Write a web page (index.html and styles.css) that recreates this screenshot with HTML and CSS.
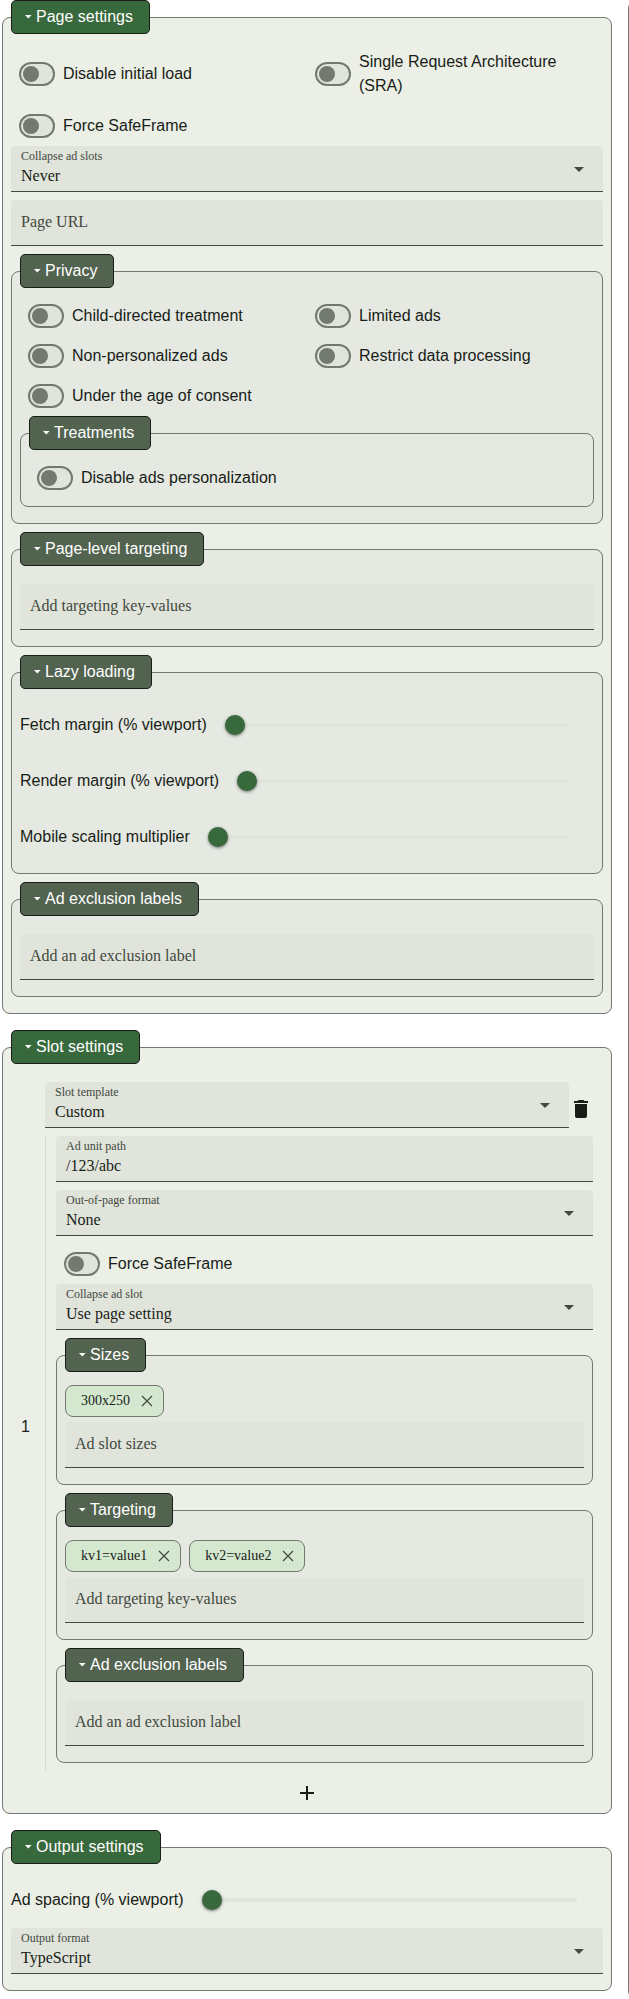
FILE: index.html
```html
<!DOCTYPE html>
<html lang="en">
<head>
<meta charset="utf-8">
<title>Ad configurator</title>
<link rel="stylesheet" href="styles.css">
</head>
<body>
<svg class="defs" width="0" height="0" aria-hidden="true">
  <symbol id="marker" viewBox="0 0 7 4"><path d="M0 0h6.600L3.300 3.400z"/></symbol>
  <symbol id="drop" viewBox="0 0 24 24"><path d="M7 10l5 5 5-5z"/></symbol>
  <symbol id="close" viewBox="0 0 18 18"><path d="M4 4l10 10M14 4L4 14"/></symbol>
  <symbol id="trash" viewBox="0 0 24 24"><path d="M6 19c0 1.100.9 2 2 2h8c1.100 0 2-.9 2-2V7H6zM19 4h-3.500l-1-1h-5l-1 1H5v2h14z"/></symbol>
  <symbol id="plus" viewBox="0 0 24 24"><path d="M19 13h-6v6h-2v-6H5v-2h6V5h2v6h6z"/></symbol>
</svg>
<div class="app">
  <main class="settings">
    <fieldset class="group">
      <legend><svg class="marker"><use href="#marker"/></svg>Page settings</legend>
      <div class="switches">
        <label class="toggle"><span class="switch"></span><span>Disable initial load</span></label>
        <label class="toggle"><span class="switch"></span><span>Single Request Architecture (SRA)</span></label>
        <label class="toggle"><span class="switch"></span><span>Force SafeFrame</span></label>
      </div>
      <div class="field"><div class="text"><span class="caption">Collapse ad slots</span><span class="value">Never</span></div><svg class="drop"><use href="#drop"/></svg></div>
      <div class="field"><span class="placeholder">Page URL</span></div>

      <fieldset class="group nested">
        <legend><svg class="marker"><use href="#marker"/></svg>Privacy</legend>
        <div class="switches">
          <label class="toggle"><span class="switch"></span><span>Child-directed treatment</span></label>
          <label class="toggle"><span class="switch"></span><span>Limited ads</span></label>
          <label class="toggle"><span class="switch"></span><span>Non-personalized ads</span></label>
          <label class="toggle"><span class="switch"></span><span>Restrict data processing</span></label>
          <label class="toggle"><span class="switch"></span><span>Under the age of consent</span></label>
        </div>
        <fieldset class="group nested">
          <legend><svg class="marker"><use href="#marker"/></svg>Treatments</legend>
          <div class="switches">
            <label class="toggle"><span class="switch"></span><span>Disable ads personalization</span></label>
          </div>
        </fieldset>
      </fieldset>

      <fieldset class="group nested">
        <legend><svg class="marker"><use href="#marker"/></svg>Page-level targeting</legend>
        <div class="chips"></div>
        <div class="field"><span class="placeholder">Add targeting key-values</span></div>
      </fieldset>

      <fieldset class="group nested">
        <legend><svg class="marker"><use href="#marker"/></svg>Lazy loading</legend>
        <div class="slider"><span>Fetch margin (% viewport)</span><span class="rail"><span class="knob"></span></span></div>
        <div class="slider"><span>Render margin (% viewport)</span><span class="rail"><span class="knob"></span></span></div>
        <div class="slider"><span>Mobile scaling multiplier</span><span class="rail"><span class="knob"></span></span></div>
      </fieldset>

      <fieldset class="group nested">
        <legend><svg class="marker"><use href="#marker"/></svg>Ad exclusion labels</legend>
        <div class="chips"></div>
        <div class="field"><span class="placeholder">Add an ad exclusion label</span></div>
      </fieldset>
    </fieldset>

    <fieldset class="group">
      <legend><svg class="marker"><use href="#marker"/></svg>Slot settings</legend>
      <div class="slot">
        <div class="slot-index">1</div>
        <div class="slot-main">
          <div class="slot-head">
            <div class="field"><div class="text"><span class="caption">Slot template</span><span class="value">Custom</span></div><svg class="drop"><use href="#drop"/></svg></div>
            <svg class="icon"><use href="#trash"/></svg>
          </div>
          <div class="slot-body">
            <div class="field"><div class="text"><span class="caption">Ad unit path</span><span class="value">/123/abc</span></div></div>
            <div class="field"><div class="text"><span class="caption">Out-of-page format</span><span class="value">None</span></div><svg class="drop"><use href="#drop"/></svg></div>
            <div class="switches">
              <label class="toggle"><span class="switch"></span><span>Force SafeFrame</span></label>
            </div>
            <div class="field"><div class="text"><span class="caption">Collapse ad slot</span><span class="value">Use page setting</span></div><svg class="drop"><use href="#drop"/></svg></div>

            <fieldset class="group nested">
              <legend><svg class="marker"><use href="#marker"/></svg>Sizes</legend>
              <div class="chips">
                <span class="chip">300x250<svg class="close"><use href="#close"/></svg></span>
              </div>
              <div class="field"><span class="placeholder">Ad slot sizes</span></div>
            </fieldset>

            <fieldset class="group nested">
              <legend><svg class="marker"><use href="#marker"/></svg>Targeting</legend>
              <div class="chips">
                <span class="chip">kv1=value1<svg class="close"><use href="#close"/></svg></span>
                <span class="chip">kv2=value2<svg class="close"><use href="#close"/></svg></span>
              </div>
              <div class="field"><span class="placeholder">Add targeting key-values</span></div>
            </fieldset>

            <fieldset class="group nested">
              <legend><svg class="marker"><use href="#marker"/></svg>Ad exclusion labels</legend>
              <div class="chips"></div>
              <div class="field"><span class="placeholder">Add an ad exclusion label</span></div>
            </fieldset>
          </div>
        </div>
      </div>
      <div class="add"><svg class="icon"><use href="#plus"/></svg></div>
    </fieldset>

    <fieldset class="group">
      <legend><svg class="marker"><use href="#marker"/></svg>Output settings</legend>
      <div class="slider"><span>Ad spacing (% viewport)</span><span class="rail"><span class="knob"></span></span></div>
      <div class="field"><div class="text"><span class="caption">Output format</span><span class="value">TypeScript</span></div><svg class="drop"><use href="#drop"/></svg></div>
    </fieldset>
  </main>
  <aside class="output"></aside>
</div>
</body>
</html>
```
FILE: styles.css
```css
:root {
  --primary: #38693c;
  --secondary: #526350;
  --chip: #d4e8d0;
  --surface: #ebefe6;
  --surface-high: #e5e9e2;
  --surface-highest: #e0e4db;
  --surface-dim: #d7dbd3;
  --text: #181d17;
  --text-muted: #424940;
  --outline: #727970;
}

* { box-sizing: border-box; }

body {
  margin: 0;
  overflow: hidden;
  background: #fff;
  color: var(--text);
  font: 16px/24px "Liberation Sans", Arial, sans-serif;
}

svg { display: block; flex: none; fill: currentColor; }
.defs { position: absolute; }

.app { display: flex; height: 1999px; overflow: hidden; }

.settings { flex: none; width: 628px; padding: 0 16px 0 2px; }

.output {
  flex: none;
  width: 40px;
  border: 1px solid var(--outline);
  border-radius: 8px;
}

.group {
  min-width: 0;
  margin: 0 0 16px;
  padding: 8px;
  border: 1px solid var(--outline);
  border-radius: 8px;
  background: var(--surface);
}

.group.nested { margin-bottom: 8px; background: var(--surface-high); }

legend {
  display: flex;
  align-items: center;
  height: 34px;
  padding: 0 16px 0 13px;
  border: 1px solid var(--text);
  border-radius: 5px;
  background: var(--primary);
  color: #fff;
}

.nested > legend { background: var(--secondary); }

.marker { width: 7px; height: 4px; margin-right: 4px; }

.switches { display: grid; grid-template-columns: 1fr 1fr; }

.toggle { display: flex; align-items: center; gap: 8px; padding: 8px; }

.switch {
  flex: none;
  width: 36px;
  height: 24px;
  padding: 2px;
  border: 2px solid var(--outline);
  border-radius: 12px;
  background: var(--surface-highest);
}

.switch::before {
  content: "";
  display: block;
  width: 16px;
  height: 16px;
  border-radius: 50%;
  background: var(--outline);
}

.field {
  display: flex;
  align-items: center;
  justify-content: space-between;
  height: 46px;
  margin-bottom: 8px;
  padding: 0 12px 0 10px;
  border-bottom: 1px solid var(--text-muted);
  border-radius: 4px 4px 0 0;
  background: var(--surface-highest);
  font-family: "Liberation Serif", "Times New Roman", serif;
}

.text { display: flex; flex-direction: column; padding-bottom: 1px; }
.caption { color: var(--text-muted); font-size: 12px; line-height: 16px; }
.placeholder { padding-bottom: 2px; color: var(--text-muted); }
.drop { width: 24px; height: 24px; color: var(--text-muted); }

.slider { display: flex; align-items: center; height: 56px; }

.rail {
  flex: 1;
  display: flex;
  align-items: center;
  height: 4px;
  margin: 0 26px;
  border-radius: 2px;
  background: var(--surface-highest);
}

.knob {
  width: 20px;
  height: 20px;
  margin-left: -8px;
  border-radius: 50%;
  background: var(--primary);
  box-shadow: 0 1px 2px rgba(0, 0, 0, .3), 0 1px 3px 1px rgba(0, 0, 0, .15);
}

.chips { display: flex; gap: 8px; padding: 5px 0; }

.chip {
  display: flex;
  align-items: center;
  gap: 8px;
  height: 32px;
  padding: 0 7px 0 15px;
  border: 1px solid var(--outline);
  border-radius: 8px;
  background: var(--chip);
  font: 14px/20px "Liberation Serif", "Times New Roman", serif;
}

.close { width: 18px; height: 18px; fill: none; stroke: var(--text-muted); stroke-width: 1.2; }

.slot { display: flex; align-items: center; padding: 10px 10px 0; }
.slot-index { width: 24px; }
.slot-main { flex: 1; min-width: 0; }
.slot-head { display: flex; align-items: center; }
.slot-head .field { flex: 1; }
.icon { width: 24px; height: 24px; }

.slot-body {
  display: flow-root;
  padding-left: 10px;
  border-left: 1px solid var(--surface-dim);
}

.add { display: flex; justify-content: center; padding-top: 10px; }
```
